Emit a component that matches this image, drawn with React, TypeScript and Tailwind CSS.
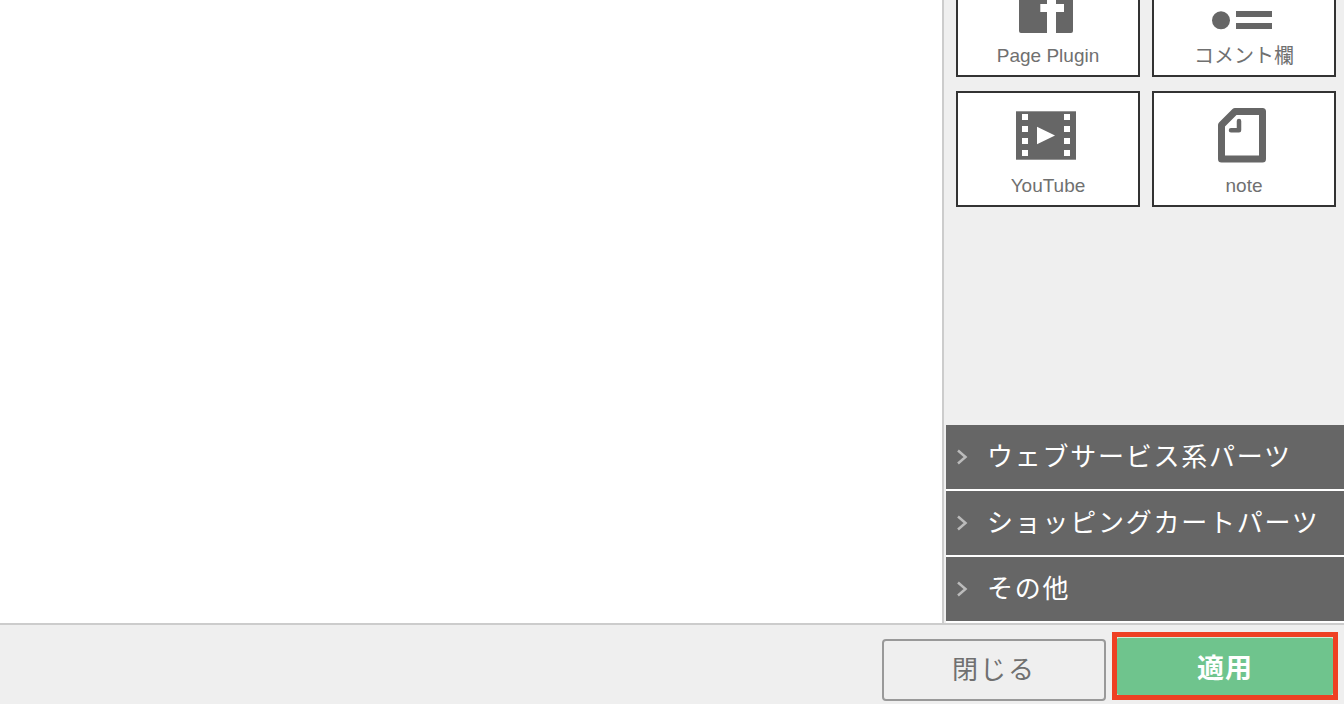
import React from 'react';

const jpFont = "font-['Liberation_Sans','Noto_Sans_CJK_JP',sans-serif]";

const FacebookIcon = () => (
    <svg viewBox="0 0 60 60" className="w-[60px] h-[60px] mr-1 shrink-0">
        <path fill="#666" d="M5 3h50a2 2 0 0 1 2 2v50a2 2 0 0 1-2 2H40V36h8V28h-8v-6c0-3 1-5 5-5h3V9h-6c-7 0-11 5-11 12v7h-6.700v8h6.700v21H5a2 2 0 0 1-2-2V5a2 2 0 0 1 2-2z" />
    </svg>
);

const CommentIcon = () => (
    <svg viewBox="0 0 60 60" className="w-[60px] h-[60px] mr-1 shrink-0">
        <circle cx="9" cy="44.300" r="9" fill="#666" />
        <rect x="24" y="35" width="36" height="6" fill="#666" />
        <rect x="24" y="47" width="36" height="6" fill="#666" />
    </svg>
);

const YoutubeIcon = () => {
    const holes = [8, 20, 32, 44];
    return (
        <svg viewBox="0 0 60 60" className="w-[60px] h-[60px] mr-1 shrink-0">
            <rect x="0" y="5.300" width="60" height="48.400" fill="#666" />
            {holes.map(y => (
                <React.Fragment key={y}>
                    <rect x="6" y={y} width="6" height="6" fill="#fff" />
                    <rect x="48" y={y} width="6" height="6" fill="#fff" />
                </React.Fragment>
            ))}
            <path d="M21 20.700 39 29.500 21 38.300z" fill="#fff" />
        </svg>
    );
};

const NoteIcon = () => (
    <svg viewBox="0 0 60 60" className="w-[60px] h-[60px] mr-1 shrink-0">
        <path d="M9.500 19 23 5.500H50.500V52.900H9.500z" fill="none" stroke="#666" strokeWidth="7" strokeLinejoin="round" />
        <path d="M19 24.300H27V15" fill="none" stroke="#666" strokeWidth="4.500" strokeLinecap="round" strokeLinejoin="round" />
    </svg>
);

const tiles = [
    { label: 'Page Plugin', icon: <FacebookIcon />, size: 'text-[19px]' },
    { label: 'コメント欄', icon: <CommentIcon />, size: 'text-[20px]' },
    { label: 'YouTube', icon: <YoutubeIcon />, size: 'text-[19px]' },
    { label: 'note', icon: <NoteIcon />, size: 'text-[19px]' },
];

const sections = ['ウェブサービス系パーツ', 'ショッピングカートパーツ', 'その他'];

const App: React.FC = () => {
    return (
        <div className={`w-[1344px] h-[704px] flex flex-col overflow-hidden bg-[#efefef] ${jpFont}`}>
            <div className="h-[623px] flex">
                <div className="flex-1 bg-white border-r-2 border-[#ccc]" />
                <div className="w-[400px] pl-[2px] flex flex-col bg-[#efefef] overflow-hidden">
                    <div className="grid grid-cols-[184px_184px] gap-x-3 gap-y-[14px] pl-[10px] -mt-[39px]">
                        {tiles.map(tile => (
                            <div key={tile.label} className="h-[116px] border-2 border-[#333] bg-white flex flex-col items-center pt-[13px]">
                                {tile.icon}
                                <div className={`mt-[8px] leading-6 text-[#707070] ${tile.size}`}>{tile.label}</div>
                            </div>
                        ))}
                    </div>
                    <div className="mt-auto bg-white flex flex-col gap-[2px] pb-[2px]">
                        {sections.map(name => (
                            <div key={name} className="h-[64px] bg-[#666] flex items-center pl-[10px] text-white">
                                <svg viewBox="0 0 12 16" className="w-3 h-4 shrink-0">
                                    <path d="M2 1.500 9.500 8 2 14.500" fill="none" stroke="#bbb" strokeWidth="2.500" />
                                </svg>
                                <span className="ml-[19px] text-[26px] tracking-[1.75px] leading-none">{name}</span>
                            </div>
                        ))}
                    </div>
                </div>
            </div>
            <div className="h-[81px] border-t-2 border-[#ccc] flex justify-end items-start pr-[6px]">
                <button className="mt-[14px] w-[224px] h-[62px] border-2 border-[#999] rounded bg-[#efefef] text-[26px] tracking-[2px] text-[#707070]">閉じる</button>
                <div className="ml-[6px] mt-[7px] w-[226px] h-[68px] border-[5px] border-[#ee4023]">
                    <button className="w-full h-full pt-[5px] bg-[#6fc48d] border-t border-[#cfeeda] rounded-[2px] text-[27px] tracking-[1px] font-bold text-white">適用</button>
                </div>
            </div>
        </div>
    );
};

export default App;
